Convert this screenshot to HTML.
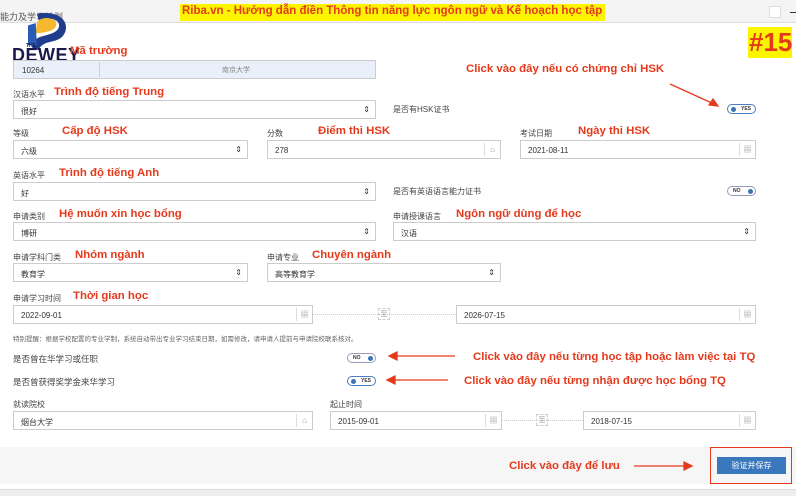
<!DOCTYPE html>
<html><head><meta charset="utf-8"><style>
*{margin:0;padding:0;box-sizing:border-box}
body{width:796px;height:496px;position:relative;background:#fff;font-family:"Liberation Sans","Noto Sans CJK SC",sans-serif;overflow:hidden;color:#333}
.a{position:absolute}
.lbl{position:absolute;font-size:8px;color:#444}
.in{position:absolute;height:19px;border:1px solid #ccc;background:#fff;font-size:8px;color:#333;padding:5px 0 0 7px}
.ic{position:absolute;right:0;top:2px;width:16px;height:13px;border-left:1px solid #ddd;font-size:8px;color:#999;text-align:center;line-height:13px}
.red{position:absolute;color:#e5391c;font-weight:bold;font-size:11.4px;white-space:nowrap}
.tg{position:absolute;width:29px;height:10px;border:1px solid #99b;border-radius:6px;font-size:5px;font-weight:bold;color:#333;line-height:8px;background:#fff}
.tg.y{border-color:#4a7fc1}
.dot{position:absolute;top:2px;width:5px;height:5px;border-radius:50%;background:#3c73b5}
.zhi{position:absolute;width:12px;height:12px;border:1px dashed #ccc;font-size:7px;color:#999;text-align:center;line-height:11px}
.dl{position:absolute;border-top:1px dotted #ccc}
</style></head><body>
<div class="a" style="left:0;top:0;width:796px;height:23px;background:#f4f4f4;border-bottom:1px solid #ddd"></div>
<div class="a" style="left:0;top:10px;font-size:9px;color:#555">能力及学习计划</div>
<div class="a" style="left:180px;top:4px;width:425px;height:17px;background:#fdf500"></div>
<div class="a" style="left:182px;top:5px;font-size:11.5px;font-weight:bold;color:#e5391c;white-space:nowrap">Riba.vn - Hướng dẫn điền Thông tin năng lực ngôn ngữ và Kế hoạch học tập</div>
<div class="a" style="left:769px;top:6px;width:12px;height:12px;border:1px solid #ddd;background:#fff"></div>
<div class="a" style="left:790px;top:12px;width:6px;height:1px;background:#333"></div>
<div class="a" style="left:748px;top:27px;width:44px;height:31px;background:#fdf500"></div>
<div class="a" style="left:749px;top:27px;font-size:26px;font-weight:bold;color:#e5391c">#15</div>

<!-- logo -->
<svg class="a" style="left:22px;top:12px" width="52" height="40" viewBox="0 0 40 36">
<path d="M10 2 C26 -2 38 6 36 16 C34 26 24 26 18 28 C14 30 12 32 12 34 L6 34 C5 28 8 24 14 22 C22 20 30 18 30 12 C30 6 20 4 12 8Z" fill="#1f3d8a"/>
<path d="M10 10 C12 4 24 4 27 9 C29 14 24 17 18 18 C14 19 11 19 9 19Z" fill="#f5b82e"/>
<path d="M2 12 L9 10 L10 30 L2 30Z" fill="#2a5bb5"/>
</svg>
<div class="a" style="left:26px;top:43px;font-size:5px;font-weight:bold;color:#1a1a4a">THE</div>
<div class="a" style="left:12px;top:46px;font-size:18px;line-height:18px;font-weight:900;color:#1a1a4a;letter-spacing:0.5px">DEWEY</div>
<div class="a" style="left:32px;top:64px;font-size:3.5px;color:#4a7fc1;letter-spacing:3px">SCHOOLS</div>

<div class="red" style="left:70px;top:45px">Mã trường</div>
<div class="in" style="left:13px;top:60px;width:363px;background:#e9f0f9;padding-left:8px">10264</div>
<div class="a" style="left:99px;top:62px;width:1px;height:15px;background:#ccd"></div>
<div class="a" style="left:222px;top:65px;font-size:7px;color:#888">南京大学</div>

<div class="lbl" style="left:13px;top:89px">汉语水平</div>
<div class="red" style="left:54px;top:86px">Trình độ tiếng Trung</div>
<div class="in" style="left:13px;top:100px;width:363px">很好<span class="a" style="right:5px;top:4px;font-size:8px">⇕</span></div>
<div class="lbl" style="left:393px;top:104px">是否有HSK证书</div>
<div class="red" style="left:466px;top:63px">Click vào đây nếu có chứng chỉ HSK</div>
<div class="tg y" style="left:727px;top:104px"><span class="dot" style="left:3px"></span><span class="a" style="left:13px;top:0">YES</span></div>

<div class="lbl" style="left:13px;top:128px">等级</div>
<div class="red" style="left:62px;top:125px">Cấp độ HSK</div>
<div class="lbl" style="left:267px;top:128px">分数</div>
<div class="red" style="left:318px;top:125px">Điểm thi HSK</div>
<div class="lbl" style="left:520px;top:128px">考试日期</div>
<div class="red" style="left:578px;top:125px">Ngày thi HSK</div>
<div class="in" style="left:13px;top:140px;width:235px">六级<span class="a" style="right:5px;top:4px">⇕</span></div>
<div class="in" style="left:267px;top:140px;width:234px">278<span class="ic">⌂</span></div>
<div class="in" style="left:520px;top:140px;width:236px">2021-08-11<span class="ic">▦</span></div>

<div class="lbl" style="left:13px;top:170px">英语水平</div>
<div class="red" style="left:59px;top:167px">Trình độ tiếng Anh</div>
<div class="in" style="left:13px;top:182px;width:363px">好<span class="a" style="right:5px;top:4px">⇕</span></div>
<div class="lbl" style="left:393px;top:186px">是否有英语语言能力证书</div>
<div class="tg" style="left:727px;top:186px"><span class="a" style="left:5px;top:0">NO</span><span class="dot" style="left:20px"></span></div>

<div class="lbl" style="left:13px;top:211px">申请类别</div>
<div class="red" style="left:59px;top:208px">Hệ muốn xin học bổng</div>
<div class="lbl" style="left:393px;top:211px">申请授课语言</div>
<div class="red" style="left:456px;top:208px">Ngôn ngữ dùng để học</div>
<div class="in" style="left:13px;top:222px;width:363px">博研<span class="a" style="right:5px;top:4px">⇕</span></div>
<div class="in" style="left:393px;top:222px;width:363px">汉语<span class="a" style="right:5px;top:4px">⇕</span></div>

<div class="lbl" style="left:13px;top:252px">申请学科门类</div>
<div class="red" style="left:75px;top:249px">Nhóm ngành</div>
<div class="lbl" style="left:267px;top:252px">申请专业</div>
<div class="red" style="left:312px;top:249px">Chuyên ngành</div>
<div class="in" style="left:13px;top:263px;width:235px">教育学<span class="a" style="right:5px;top:4px">⇕</span></div>
<div class="in" style="left:267px;top:263px;width:234px">高等教育学<span class="a" style="right:5px;top:4px">⇕</span></div>

<div class="lbl" style="left:13px;top:293px">申请学习时间</div>
<div class="red" style="left:73px;top:290px">Thời gian học</div>
<div class="in" style="left:13px;top:305px;width:300px">2022-09-01<span class="ic">▦</span></div>
<div class="dl" style="left:313px;top:314px;width:143px"></div>
<div class="zhi" style="left:378px;top:308px">至</div>
<div class="in" style="left:456px;top:305px;width:300px">2026-07-15<span class="ic">▦</span></div>
<div class="a" style="left:13px;top:333px;font-size:6.5px;color:#666;white-space:nowrap">特别提醒：根据学校配置的专业学制，系统自动带出专业学习结束日期，如需修改，请申请人提前与申请院校联系核对。</div>

<div class="lbl" style="left:13px;top:353px;font-size:8.5px">是否曾在华学习或任职</div>
<div class="tg" style="left:347px;top:353px"><span class="a" style="left:5px;top:0">NO</span><span class="dot" style="left:20px"></span></div>
<div class="red" style="left:473px;top:351px">Click vào đây nếu từng học tập hoặc làm việc tại TQ</div>
<div class="lbl" style="left:13px;top:376px;font-size:8.5px">是否曾获得奖学金来华学习</div>
<div class="tg y" style="left:347px;top:376px"><span class="dot" style="left:3px"></span><span class="a" style="left:13px;top:0">YES</span></div>
<div class="red" style="left:464px;top:375px">Click vào đây nếu từng nhận được học bổng TQ</div>

<div class="lbl" style="left:13px;top:399px">就读院校</div>
<div class="lbl" style="left:330px;top:399px">起止时间</div>
<div class="in" style="left:13px;top:411px;width:300px">烟台大学<span class="ic">⌂</span></div>
<div class="in" style="left:330px;top:411px;width:172px">2015-09-01<span class="ic">▦</span></div>
<div class="dl" style="left:502px;top:420px;width:81px"></div>
<div class="zhi" style="left:536px;top:414px">至</div>
<div class="in" style="left:583px;top:411px;width:173px">2018-07-15<span class="ic">▦</span></div>

<div class="a" style="left:0;top:447px;width:796px;height:37px;background:#f6f6f6"></div>
<div class="a" style="left:0;top:489px;width:796px;height:7px;background:#eee;border-top:1px solid #ddd"></div>
<div class="red" style="left:509px;top:460px">Click vào đây để lưu</div>
<div class="a" style="left:710px;top:447px;width:82px;height:37px;border:1.5px solid #e5391c"></div>
<div class="a" style="left:717px;top:457px;width:69px;height:17px;background:#3a78bd;color:#fff;font-size:8px;text-align:center;line-height:17px">验证并保存</div>
<svg class="a" style="left:0;top:0" width="796" height="496"><g stroke="#e5391c" stroke-width="1.3" fill="#e5391c">
<line x1="670" y1="84" x2="714" y2="104"/><polygon points="718,106 709,105 713,99"/>
<line x1="455" y1="356" x2="396" y2="356"/><polygon points="389,356 397,352 397,360"/>
<line x1="448" y1="380" x2="394" y2="380"/><polygon points="387,380 395,376 395,384"/>
<line x1="634" y1="466" x2="684" y2="466"/><polygon points="692,466 684,462 684,470"/>
</g></svg>
</body></html>
